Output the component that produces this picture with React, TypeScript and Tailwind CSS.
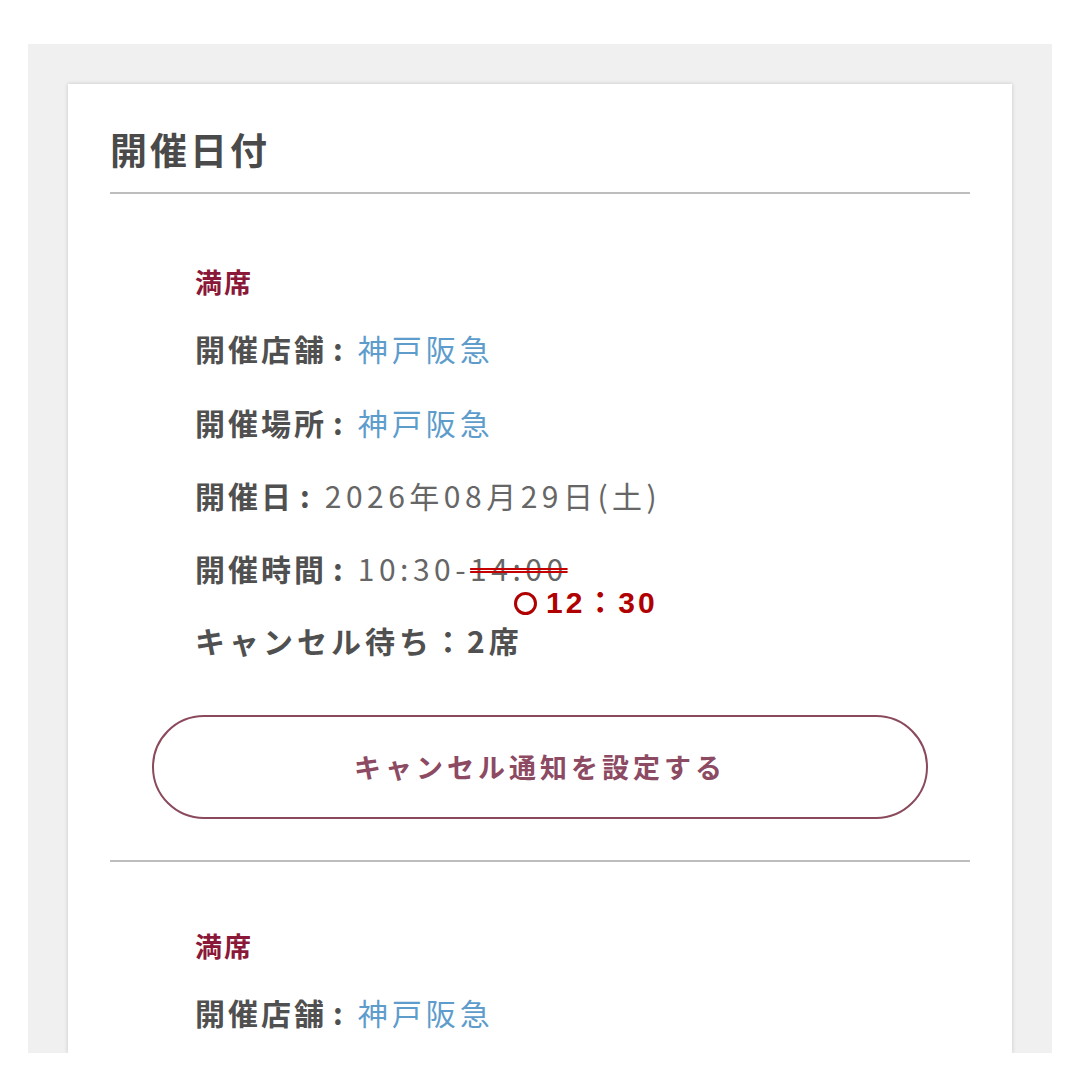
const jp = { fontFamily: '"Noto Sans CJK JP", "Noto Sans", sans-serif' };

const Row = ({ label, value, tone, className = "" }: { label: string; value: React.ReactNode; tone: "link" | "plain"; className?: string }) => (
  <p className={`pl-[43px] text-[30px] leading-[30px] tracking-[3px] whitespace-nowrap ${className}`}>
    <span className="font-bold text-[#505050]">{label}</span>
    <span className="font-bold text-[#505050] ml-[6px] mr-[12px]">:</span>
    <span className={tone === "link" ? "text-[#5d9ccb] tracking-[4px]" : "text-[#666666] tracking-[4.5px]"}>{value}</span>
  </p>
);

const Session = ({ children }: { children?: React.ReactNode }) => (
  <div className="px-[42px]">
    <p className="pl-[43px] text-[27px] leading-[26px] font-bold tracking-[2px] text-[#8a1838]">満席</p>
    {children}
  </div>
);

export default function App() {
  return (
    <div className="w-[1080px] h-[1080px] overflow-hidden bg-white pt-[44px] px-[28px]" style={jp}>
      <div className="h-[1009px] bg-[#f0f0f0] pt-[40px] px-[40px] overflow-hidden">
        <div className="h-full bg-white px-[42px] shadow-[0_0_4px_rgba(0,0,0,0.18)]">
          <h1 className="pt-[47px] text-[37px] leading-[37px] tracking-[3px] font-bold text-[#4a4a4a]">開催日付</h1>
          <div className="mt-[24px] h-[2px] bg-[#bdbdbd]" />

          <div className="mt-[75px]">
            <Session>
              <Row className="mt-[38px]" label="開催店舗" value="神戸阪急" tone="link" />
              <Row className="mt-[44px]" label="開催場所" value="神戸阪急" tone="link" />
              <Row className="mt-[43px]" label="開催日" value="2026年08月29日(土)" tone="plain" />
              <div className="relative mt-[43px]">
                <Row
                  label="開催時間"
                  tone="plain"
                  value={
                    <>
                      10:30-
                      <span className="line-through decoration-double decoration-[#c40000] decoration-[2px]">14:00</span>
                    </>
                  }
                />
                <span
                  className="absolute left-[362px] top-[34px] flex items-center gap-[9px] text-[30px] leading-[32px] font-bold tracking-[3px] text-[#b00000] whitespace-nowrap"
                  style={{ fontFamily: '"Liberation Sans", "Noto Sans CJK JP", sans-serif' }}
                >
                  <span className="inline-block w-[23px] h-[23px] rounded-full border-[3px] border-[#b00000]" />
                  <span>12：30</span>
                </span>
              </div>
              <p className="mt-[42px] pl-[43px] text-[30px] leading-[30px] tracking-[4px] font-bold text-[#505050] whitespace-nowrap">
                キャンセル待ち：2席
              </p>
              <button className="mt-[60px] w-full h-[104px] rounded-full border-2 border-[#8a4a5c] bg-white text-[27px] tracking-[4px] font-bold text-[#8c4a63]">
                キャンセル通知を設定する
              </button>
            </Session>
          </div>

          <div className="mt-[41px] h-[2px] bg-[#bdbdbd]" />

          <div className="mt-[71px]">
            <Session>
              <Row className="mt-[38px]" label="開催店舗" value="神戸阪急" tone="link" />
            </Session>
          </div>
        </div>
      </div>
    </div>
  );
}
